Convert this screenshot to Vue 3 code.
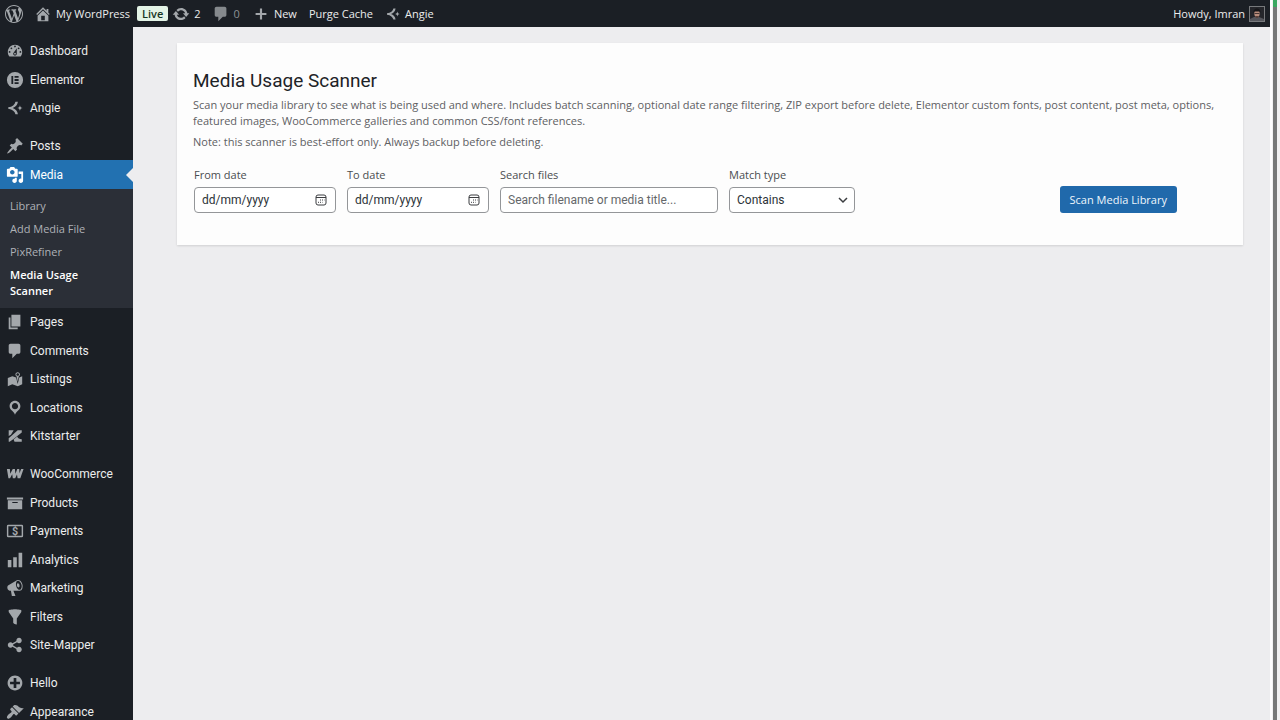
<script setup>
import { ref } from "vue";

const icons = {
  wordpress:
    "M20 10c0-5.51-4.49-10-10-10C4.48 0 0 4.49 0 10c0 5.52 4.48 10 10 10 5.51 0 10-4.48 10-10zM7.78 15.37L4.37 6.22c.55-.02 1.17-.08 1.17-.08.5-.06.44-1.13-.06-1.11 0 0-1.45.11-2.37.11-.18 0-.37 0-.58-.01C4.12 2.69 6.87 1.11 10 1.11c2.33 0 4.45.87 6.05 2.34-.68-.11-1.65.39-1.65 1.58 0 .74.45 1.36.9 2.1.35.61.55 1.36.55 2.46 0 1.49-1.4 5-1.4 5l-3.03-8.37c.54-.02.82-.17.82-.17.5-.05.44-1.25-.06-1.22 0 0-1.44.12-2.38.12-.87 0-2.33-.12-2.33-.12-.5-.03-.56 1.2-.06 1.22l.92.08 1.26 3.41zM17.41 10c.24-.64.74-1.87.43-4.25.7 1.29 1.05 2.71 1.05 4.25 0 3.29-1.73 6.24-4.4 7.78.97-2.59 1.94-5.2 2.92-7.78zM6.1 18.09C3.12 16.65 1.11 13.53 1.11 10c0-1.3.23-2.48.72-3.59C3.25 10.3 4.67 14.2 6.1 18.09zm4.03-6.63l2.58 6.98c-.86.29-1.76.45-2.71.45-.79 0-1.57-.11-2.29-.33.81-2.38 1.62-4.74 2.42-7.1z",
  home: "M16 8.5l1.53 1.53-1.06 1.06L10 4.6l-6.47 6.49-1.06-1.06L10 2.5l4 4v-2h2v4zm-6-2.46l6 5.99V18H4v-5.97zM12 17v-5H8v5h4z",
  update:
    "M10.2 3.28c3.53 0 6.43 2.61 6.92 6h2.08l-3.5 4-3.5-4h2.32c-.45-1.97-2.21-3.45-4.32-3.45-1.45 0-2.73.71-3.54 1.78L4.95 5.66C6.23 4.2 8.11 3.28 10.2 3.28zm-.4 13.44c-3.52 0-6.43-2.61-6.92-6H.8l3.5-4c1.17 1.33 2.33 2.67 3.5 4H5.48c.45 1.97 2.21 3.45 4.32 3.45 1.45 0 2.73-.71 3.54-1.78l1.71 1.95c-1.28 1.46-3.15 2.38-5.25 2.38z",
  plus: "M8.800 4h2.400v4.800H16v2.400h-4.800V16H8.800v-4.800H4V8.800h4.800z",
  dashboard:
    "M3.76 16h12.48c1.1-1.37 1.76-3.11 1.76-5 0-4.42-3.58-8-8-8s-8 3.58-8 8c0 1.89.66 3.63 1.76 5zM10 4c.55 0 1 .45 1 1s-.45 1-1 1-1-.45-1-1 .45-1 1-1zM6 6c.55 0 1 .45 1 1s-.45 1-1 1-1-.45-1-1 .45-1 1-1zm8 0c.55 0 1 .45 1 1s-.45 1-1 1-1-.45-1-1 .45-1 1-1zm-5.37 5.55L12 7v6c0 1.1-.9 2-2 2s-2-.9-2-2c0-.57.24-1.08.63-1.45zM4 10c.55 0 1 .45 1 1s-.45 1-1 1-1-.45-1-1 .45-1 1-1zm12 0c.55 0 1 .45 1 1s-.45 1-1 1-1-.45-1-1 .45-1 1-1zm-5 3c0-.55-.45-1-1-1s-1 .45-1 1 .45 1 1 1 1-.45 1-1z",
  elementor:
    "M10 1a9 9 0 1 0 0 18 9 9 0 0 0 0-18zM6 5.500h2v9H6zM9.500 5.500H14v2H9.500zM9.500 9H14v2H9.500zM9.500 12.500H14v2H9.500z",
  angie:
    "M10.500 3h2.700c-.4 3.700-2.700 5.900-5.700 7 3 1.100 5.300 3.300 5.700 7h-2.700c-.7-3.300-3.300-5.600-8-6.200V9.200c4.700-.6 7.300-2.900 8-6.200zM15.500 6.900c.4 2 1.100 2.700 3.100 3.100-2 .4-2.700 1.100-3.100 3.100-.4-2-1.100-2.700-3.100-3.100 2-.4 2.700-1.100 3.100-3.100z",
  post: "M10.44 3.02l1.82-1.82 6.36 6.35-1.83 1.82c-1.05-.68-2.48-.57-3.41.36l-.75.75c-.92.93-1.04 2.35-.35 3.41l-1.83 1.82-2.41-2.41-2.8 2.79c-.42.42-3.38 2.71-3.8 2.29s1.86-3.39 2.28-3.81l2.79-2.79L4.1 9.36l1.83-1.82c1.05.69 2.48.57 3.4-.36l.75-.75c.93-.92 1.05-2.35.36-3.41z",
  media:
    "M13 11V4c0-.55-.45-1-1-1h-1.67L9 1H5L3.67 3H2c-.55 0-1 .45-1 1v7c0 .55.45 1 1 1h10c.55 0 1-.45 1-1zM7 4.5c1.38 0 2.5 1.12 2.5 2.5S8.38 9.5 7 9.5 4.5 8.38 4.5 7 5.62 4.5 7 4.5zM14 6h5v10.5c0 1.38-1.12 2.5-2.5 2.5S14 17.88 14 16.5s1.12-2.5 2.5-2.5c.17 0 .34.02.5.05V9h-3V6zm-4 8.05V13h2v3.5c0 1.38-1.12 2.5-2.5 2.5S7 17.88 7 16.5 8.12 14 9.5 14c.17 0 .34.02.5.05z",
  page: "M6 15V2h10v13H6zm-1 1h8v2H3V5h2v11z",
  comment:
    "M5 2h9c1.1 0 2 .9 2 2v7c0 1.1-.9 2-2 2h-2l-5 5v-5H5c-1.1 0-2-.9-2-2V4c0-1.1.9-2 2-2z",
  map: "M13 13.14l1.17-5.94c.79-.43 1.33-1.25 1.33-2.2 0-1.38-1.12-2.5-2.5-2.5S10.5 3.62 10.5 5c0 .95.54 1.77 1.33 2.2zm0-9.64c.83 0 1.5.67 1.5 1.5s-.67 1.5-1.5 1.5-1.5-.67-1.5-1.5.67-1.5 1.5-1.5zm1.72 4.8L18 6.97v9L13.12 18 7 15.97l-5 2v-9l5-2 4.27 1.41 1.73 7.3z",
  location:
    "M10 2C6.69 2 4 4.69 4 8c0 2.02 1.17 3.71 2.53 4.89.43.37 1.18.96 1.85 1.83.74.97 1.41 2.01 1.62 2.71.21-.7.88-1.74 1.62-2.71.67-.87 1.42-1.46 1.85-1.83C14.83 11.71 16 10.02 16 8c0-3.31-2.69-6-6-6zm0 2.56c1.9 0 3.44 1.54 3.44 3.44S11.9 11.44 10 11.44 6.56 9.9 6.56 8 8.1 4.56 10 4.56z",
  kitstarter:
    "M3 3.500h5.500L5.500 8.500 3 10zM13 3.500h4.500v2.500L8 13.500l-4 3H3v-4zM12.500 10.500c.5 2 2.500 2.800 5 3v3H9.500L8.500 14z",
  woo: "M1 4.500h3.300l.4 5.300 2.800-5.300h2.400l.6 5.300 2-5.300h2.200l.3 4.800 1.800-4.800h2.700l-3.600 10.200h-3l-.7-4.200-2 4.200H7.600l-.7-4.500-2.400 4.500H2.700z",
  archive: "M19 4v2H1V4h18zM2 7h16v10H2V7zm11 3V9H7v1h6z",
  payments:
    "M2.500 3h15A1.500 1.500 0 0 1 19 4.500v11a1.500 1.500 0 0 1-1.500 1.500h-15A1.500 1.500 0 0 1 1 15.500v-11A1.500 1.500 0 0 1 2.500 3zM2.600 4.600v10.800h14.800V4.600z",
  chart: "M18 18V2h-4v16h4zm-6 0V7H8v11h4zm-6 0v-8H2v8h4z",
  megaphone:
    "M18.15 5.94c.46 1.62.38 3.22-.02 4.48-.42 1.28-1.26 2.18-2.3 2.48-.16.06-.26.06-.4.06-.06.02-.12.02-.18.02-.06.02-.14.02-.22.02h-6.8l2.22 5.5c.02.14-.06.26-.14.34-.08.1-.24.16-.34.16H6.95c-.1 0-.26-.06-.34-.16-.08-.08-.16-.2-.14-.34l-1-5.5H4.25l-.02-.02c-.5.06-1.08-.18-1.54-.62s-.88-1.08-1.06-1.88c-.24-.8-.2-1.56-.02-2.2.18-.62.58-1.08 1.06-1.3l.02-.02 9-5.4c.1-.06.18-.1.24-.16.06-.04.14-.08.24-.12.16-.08.28-.12.5-.18 1.04-.3 2.24.1 3.22.98s1.84 2.24 2.26 3.86zm-2.58 5.98h-.02c.4-.1.74-.34 1.04-.7.58-.7.86-1.76.86-3.04 0-.64-.1-1.3-.28-1.98-.34-1.36-1.02-2.5-1.78-3.24s-1.68-1.1-2.46-.88c-.82.22-1.4.96-1.7 2-.32 1.04-.28 2.36.06 3.72.38 1.36 1 2.5 1.8 3.24.78.74 1.62 1.1 2.48.88zm-2.54-7.08c.22-.04.42-.02.62.04.38.16.76.48 1.02 1s.42 1.2.42 1.78c0 .3-.04.56-.12.8-.18.48-.44.84-.86.94-.34.1-.8-.06-1.14-.4s-.64-.86-.78-1.5c-.18-.62-.12-1.24.02-1.72s.48-.84.82-.94z",
  filter:
    "M3 4.5v-2s3.34-1 7-1 7 1 7 1v2l-5 7.03v6.97s-1.22-.09-2.25-.59S8 16.5 8 16.5v-4.97z",
  share:
    "M14.5 12c1.66 0 3 1.34 3 3s-1.34 3-3 3-3-1.34-3-3c0-.24.03-.46.09-.69l-4.38-2.3c-.55.61-1.33.99-2.21.99-1.66 0-3-1.34-3-3s1.34-3 3-3c.88 0 1.66.39 2.21.99l4.38-2.3c-.06-.23-.09-.45-.09-.69 0-1.66 1.34-3 3-3s3 1.34 3 3-1.34 3-3 3c-.88 0-1.66-.39-2.21-.99l-4.38 2.3c.06.23.09.45.09.69s-.03.46-.09.69l4.38 2.3c.55-.61 1.33-.99 2.21-.99z",
  plusAlt:
    "M15.8 4.2c3.2 3.21 3.2 8.39 0 11.6-3.21 3.2-8.39 3.2-11.6 0C1 12.59 1 7.41 4.2 4.2 7.41 1 12.59 1 15.8 4.2zm-4.3 11.3v-4h4v-3h-4v-4h-3v4h-4v3h4v4h3z",
  appearance:
    "M14.48 11.06L7.41 3.99l1.5-1.5c.5-.56 2.3-.47 3.51.32 1.21.8 1.43 1.28 2.91 2.1 1.18.64 2.45 1.26 4.45.85zm-.71.71L6.7 4.7 4.93 6.47c-.39.39-.39 1.02 0 1.41l1.06 1.06c.39.39.39 1.03 0 1.42-.6.6-1.43 1.11-2.21 1.69-.35.26-.7.53-1.01.84C1.43 14.23.4 16.08 1.4 17.07c.99 1 2.84-.03 4.18-1.36.31-.31.58-.66.85-1.02.57-.78 1.08-1.61 1.69-2.21.39-.39 1.02-.39 1.41 0l1.06 1.06c.39.39 1.02.39 1.41 0z",
};

const menuGroups = [
  [
    { label: "Dashboard", icon: "dashboard" },
    { label: "Elementor", icon: "elementor" },
    { label: "Angie", icon: "angie" },
  ],
  [
    { label: "Posts", icon: "post" },
    {
      label: "Media",
      icon: "media",
      active: true,
      children: [
        "Library",
        "Add Media File",
        "PixRefiner",
        "Media Usage Scanner",
      ],
    },
    { label: "Pages", icon: "page" },
    { label: "Comments", icon: "comment" },
    { label: "Listings", icon: "map" },
    { label: "Locations", icon: "location" },
    { label: "Kitstarter", icon: "kitstarter" },
  ],
  [
    { label: "WooCommerce", icon: "woo" },
    { label: "Products", icon: "archive" },
    { label: "Payments", icon: "payments" },
    { label: "Analytics", icon: "chart" },
    { label: "Marketing", icon: "megaphone" },
    { label: "Filters", icon: "filter" },
    { label: "Site-Mapper", icon: "share" },
  ],
  [
    { label: "Hello", icon: "plusAlt" },
    { label: "Appearance", icon: "appearance" },
  ],
];

const currentPage = "Media Usage Scanner";

const fromDate = ref("");
const toDate = ref("");
const search = ref("");
const matchType = ref("contains");
</script>

<template>
  <div class="screen">
    <div class="admin">
      <!-- ADMIN BAR -->
      <header class="adminbar">
        <a href="#" class="bar-item bar-logo" aria-label="About WordPress">
          <svg class="icon" viewBox="0 0 20 20">
            <path :d="icons.wordpress" />
          </svg>
        </a>
        <a href="#" class="bar-item bar-site">
          <svg class="icon" viewBox="0 0 20 20"><path :d="icons.home" /></svg>
          My WordPress
        </a>
        <span class="live">Live</span>
        <a href="#" class="bar-item bar-updates">
          <svg class="icon" viewBox="0 0 20 20"><path :d="icons.update" /></svg>
          2
        </a>
        <a href="#" class="bar-item bar-comments">
          <svg class="icon" viewBox="0 0 20 20">
            <path :d="icons.comment" />
          </svg>
          0
        </a>
        <a href="#" class="bar-item bar-new">
          <svg class="icon" viewBox="0 0 20 20"><path :d="icons.plus" /></svg>
          New
        </a>
        <a href="#" class="bar-item bar-purge">Purge Cache</a>
        <a href="#" class="bar-item bar-angie">
          <svg class="icon small" viewBox="0 0 20 20">
            <path :d="icons.angie" />
          </svg>
          Angie
        </a>
        <a href="#" class="bar-item bar-account">
          Howdy, Imran
          <svg class="avatar" viewBox="0 0 16 16">
            <rect width="16" height="16" fill="#77797c" />
            <rect x="1" y="1" width="14" height="14" fill="#25262b" />
            <path d="M1 15v-2l4-2h5l5 2v2z" fill="#55565c" />
            <ellipse cx="8" cy="7.500" rx="2.700" ry="3.700" fill="#b98d7c" />
            <path d="M4.500 7c-1-6 8-6 7 0l-1-1.500h-5z" fill="#17171a" />
            <path d="M5.500 7.500h5" stroke="#4a3935" />
            <path d="M6 10h4l-1 2H7z" fill="#5a413b" />
          </svg>
        </a>
      </header>

      <div class="body">
        <!-- SIDEBAR -->
        <nav class="sidebar">
          <ul v-for="(group, i) in menuGroups" :key="i" class="menu">
            <li v-for="item in group" :key="item.label" class="menu-item">
              <a href="#" class="menu-link" :class="{ active: item.active }">
                <svg class="icon" viewBox="0 0 20 20">
                  <path :d="icons[item.icon]" fill-rule="evenodd" />
                  <text
                    v-if="item.icon === 'payments'"
                    class="dollar"
                    x="10"
                    y="14"
                    text-anchor="middle"
                  >
                    $
                  </text>
                </svg>
                {{ item.label }}
              </a>
              <ul v-if="item.children" class="submenu">
                <li v-for="child in item.children" :key="child">
                  <a
                    href="#"
                    class="submenu-link"
                    :class="{ current: child === currentPage }"
                    >{{ child }}</a
                  >
                </li>
              </ul>
            </li>
          </ul>
        </nav>

        <!-- CONTENT -->
        <main class="content">
          <section class="card">
            <h1>Media Usage Scanner</h1>
            <p class="description">
              Scan your media library to see what is being used and where.
              Includes batch scanning, optional date range filtering, ZIP export
              before delete, Elementor custom fonts, post content, post meta,
              options, featured images, WooCommerce galleries and common
              CSS/font references.
            </p>
            <p class="description">
              Note: this scanner is best-effort only. Always backup before
              deleting.
            </p>

            <form class="filters" @submit.prevent>
              <div class="field field-date">
                <label for="from-date">From date</label>
                <div class="control">
                  <input
                    id="from-date"
                    v-model="fromDate"
                    class="date-input"
                    type="text"
                    placeholder="dd/mm/yyyy"
                  />
                  <button type="button" class="picker" aria-label="Pick from date">
                    <svg viewBox="0 0 12 12">
                      <rect x="1" y="1" width="10" height="10" rx="2" />
                      <path d="M1 3.500h10" />
                      <path class="days" d="M5 6h4.500M3 8.300h4.500" />
                    </svg>
                  </button>
                </div>
              </div>
              <div class="field field-date">
                <label for="to-date">To date</label>
                <div class="control">
                  <input
                    id="to-date"
                    v-model="toDate"
                    class="date-input"
                    type="text"
                    placeholder="dd/mm/yyyy"
                  />
                  <button type="button" class="picker" aria-label="Pick to date">
                    <svg viewBox="0 0 12 12">
                      <rect x="1" y="1" width="10" height="10" rx="2" />
                      <path d="M1 3.500h10" />
                      <path class="days" d="M5 6h4.500M3 8.300h4.500" />
                    </svg>
                  </button>
                </div>
              </div>
              <div class="field field-search">
                <label for="search-files">Search files</label>
                <div class="control">
                  <input
                    id="search-files"
                    v-model="search"
                    type="text"
                    placeholder="Search filename or media title..."
                  />
                </div>
              </div>
              <div class="field field-match">
                <label for="match-type">Match type</label>
                <div class="control">
                  <select id="match-type" v-model="matchType">
                    <option value="contains">Contains</option>
                    <option value="exact">Exact</option>
                  </select>
                  <svg class="chevron" viewBox="0 0 12 12">
                    <path d="M2 4l4 4 4-4" />
                  </svg>
                </div>
              </div>
              <button type="submit" class="scan">Scan Media Library</button>
            </form>
          </section>
        </main>
      </div>
    </div>

    <!-- SCROLL TRACK -->
    <div class="track">
      <div class="thumb"></div>
    </div>
  </div>
</template>

<style>
body {
  margin: 0;
  background: #ededef;
}
</style>

<style scoped>
.screen {
  display: flex;
  height: 100vh;
  overflow: hidden;
  font-family: Roboto, "Liberation Sans", sans-serif;
  font-size: 12px;
  background: #ededef;
  color: #2c3338;
}

.admin {
  flex: 1;
  min-width: 0;
  display: flex;
  flex-direction: column;
}

a {
  text-decoration: none;
}

ul {
  list-style: none;
  margin: 0;
  padding: 0;
}

.icon {
  width: 18px;
  height: 18px;
  flex-shrink: 0;
  fill: #a3a7ab;
}

.icon.small {
  width: 16px;
  height: 16px;
}

.adminbar,
.submenu,
.description,
.field label,
.scan {
  font-family: "Open Sans", "Liberation Sans", sans-serif;
  font-size: 11px;
}

.adminbar {
  height: 27px;
  flex-shrink: 0;
  display: flex;
  align-items: center;
  background: #1b1f25;
}

.bar-item {
  display: flex;
  align-items: center;
  gap: 4px;
  color: #eceded;
  white-space: nowrap;
}

.bar-logo {
  padding-left: 5px;
}

.bar-site {
  padding-left: 11px;
}

.live {
  margin-left: 7px;
  padding: 0 5px;
  border-radius: 2px;
  background: #e3f3e6;
  color: #16351f;
  font-weight: 600;
  line-height: 15px;
}

.bar-updates {
  margin-left: 4px;
}

.bar-comments {
  margin-left: 11px;
  color: #8d9195;
}

.bar-comments .icon {
  fill: #85898d;
}

.bar-new {
  margin-left: 12px;
}

.bar-purge {
  margin-left: 12px;
}

.bar-angie {
  margin-left: 12px;
}

.bar-account {
  margin-left: auto;
  padding-right: 5px;
}

.avatar {
  width: 16px;
  height: 16px;
}

.body {
  flex: 1;
  min-height: 0;
  display: flex;
}

.sidebar {
  width: 133px;
  flex-shrink: 0;
  padding-top: 10px;
  box-sizing: border-box;
  overflow: hidden;
  background: #1b1f25;
}

.menu + .menu {
  margin-top: 10px;
}

.menu-link {
  position: relative;
  display: flex;
  align-items: center;
  gap: 6px;
  height: 28px;
  padding-left: 6px;
  color: #eceded;
}

.menu-item:nth-child(even) > .menu-link {
  height: 29px;
}

.menu-link.active {
  background: #2271b1;
  color: #fff;
}

.menu-link.active .icon {
  fill: #fff;
}

/* notch pointing at the open item */
.menu-link.active::after {
  content: "";
  position: absolute;
  right: 0;
  top: 50%;
  margin-top: -7px;
  border: 7px solid transparent;
  border-left-width: 0;
  border-right-color: #ededef;
}

.dollar {
  font-size: 12px;
  font-weight: 700;
}

.submenu {
  padding: 5px 0 6px;
  background: #2b2f37;
}

.submenu-link {
  display: block;
  padding: 4px 30px 3px 10px;
  line-height: 16px;
  color: #aeb1b6;
}

.submenu-link.current {
  color: #fff;
  font-weight: 600;
}

.content {
  flex: 1;
  min-width: 0;
  padding: 16px 27px 0 44px;
}

.card {
  padding: 27px 16px 32px;
  background: #fdfdfd;
  box-shadow: 0 1px 2px rgba(0, 0, 0, 0.12);
}

h1 {
  margin: 0;
  font-size: 19px;
  font-weight: 400;
  line-height: 22px;
  color: #1d2327;
}

.description {
  margin: 5px 0 4px;
  line-height: 16px;
  color: #5d6063;
}

.filters {
  display: flex;
  flex-wrap: wrap;
  align-items: flex-end;
  gap: 11px;
  margin-top: 17px;
  padding-left: 1px;
}

.field {
  display: flex;
  flex-direction: column;
  gap: 4px;
}

.field label {
  line-height: 16px;
  color: #4a4d50;
}

.field-date {
  width: 142px;
}

.field-search {
  width: 218px;
}

.field-match {
  width: 126px;
}

.control {
  display: flex;
  align-items: center;
  height: 26px;
  box-sizing: border-box;
  border: 1px solid #949699;
  border-radius: 4px;
  background: #fff;
}

.control input,
.control select {
  flex: 1;
  min-width: 0;
  height: 100%;
  padding: 0 7px;
  border: 0;
  outline: 0;
  background: transparent;
  font: inherit;
  color: #2c3338;
}

.control select {
  appearance: none;
}

.control input::placeholder {
  color: #65686b;
  opacity: 1;
}

.control .date-input::placeholder {
  color: #2c3338;
}

.picker {
  display: flex;
  margin-right: 8px;
  padding: 0;
  border: 0;
  background: none;
}

.picker svg {
  width: 12px;
  height: 12px;
  fill: none;
  stroke: #3b3d40;
}

.picker .days {
  stroke-dasharray: 1 1;
}

.chevron {
  width: 12px;
  height: 12px;
  margin-right: 5px;
  fill: none;
  stroke: #3b3d40;
  stroke-width: 1.500;
}

.scan {
  height: 27px;
  margin-left: auto;
  margin-right: 50px;
  padding: 0 10px;
  border: 0;
  border-radius: 3px;
  background: #2069ab;
  color: #eef6fc;
}

.track {
  width: 10px;
  flex-shrink: 0;
  display: flex;
  padding-left: 1px;
  box-sizing: border-box;
  border-left: 2px solid #fdfdfd;
  background: #f1f1f1;
}

.thumb {
  width: 4px;
  background: #767877;
  border-top: 7px solid #3aa860;
}
</style>
